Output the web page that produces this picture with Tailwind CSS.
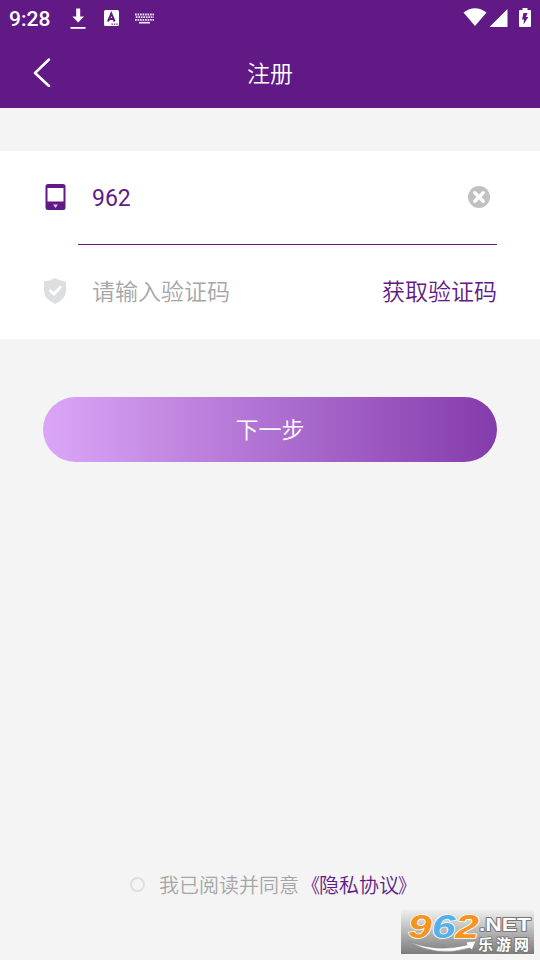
<!DOCTYPE html>
<html lang="zh-CN">
<head>
    <meta charset="UTF-8">
    <meta name="viewport" content="width=device-width, initial-scale=1.0">
    <title>注册</title>
    <script src="https://cdn.jsdelivr.net/npm/@tailwindcss/browser@4"></script>
</head>
<body class="bg-[#f4f4f4] font-[Roboto,'Noto_Sans_CJK_SC',sans-serif]">

    <div class="relative flex flex-col w-[540px] h-[960px] overflow-hidden">

        <!-- Header -->
        <header class="h-[108px] bg-[#611986] text-white">
            <!-- Status bar -->
            <div class="flex items-center h-9 pl-[9px] pr-[9px]">
                <span class="w-[61px] pt-[2px] text-[21px] leading-9 font-medium">9:28</span>
                <svg class="w-4 h-[22px]" viewBox="0 0 16 22" fill="white">
                    <path d="M6.2 1.5h4v8H14l-5.8 6-5.8-6h3.8z"/>
                    <path d="M.5 20h15v1.8H.5z"/>
                </svg>
                <svg class="ml-[18px] w-[15px] h-4" viewBox="0 0 15 16">
                    <rect width="15" height="16" rx="1.5" fill="white"/>
                    <path d="M4 11.5 7.3 3.5 10.6 11.5M5.2 9h4.3" fill="none" stroke="#611986" stroke-width="2"/>
                    <path d="M7.5 13.5h1.3v1.2H7.5zM10 13.5h1.3v1.2H10zM12.3 13.5h1.3v1.2h-1.3z" fill="#611986"/>
                </svg>
                <svg class="ml-4 w-[19px] h-[11px]" viewBox="0 0 19 11" fill="none" stroke="#efe4f4">
                    <path d="M0 1.5h19" stroke-width="2" stroke-dasharray="1.7 .8"/>
                    <path d="M.8 4.2h18" stroke-width="1.8" stroke-dasharray="1.7 .8"/>
                    <path d="M0 6.9h19" stroke-width="1.8" stroke-dasharray="1.7 .8"/>
                    <path d="M4 9.7h11" stroke-width="1.7"/>
                </svg>
                <svg class="ml-auto w-6 h-5" viewBox="0 0 24 20" fill="white">
                    <path d="M.5 4.5Q12-4 23.5 4.5L12 18z"/>
                </svg>
                <svg class="ml-[2px] w-[19px] h-5" viewBox="0 0 19 20" fill="white">
                    <path d="M18.5 1v18H.5z"/>
                </svg>
                <svg class="ml-[11px] w-3 h-5" viewBox="0 0 12 20">
                    <path d="M3.5 0h5v2H11q1 0 1 1v15q0 1-1 1H1q-1 0-1-1V3q0-1 1-1h2.5z" fill="white"/>
                    <path d="M4.5 5h4L7 9h2.3L4.5 16.5 5 11.5H3z" fill="#611986"/>
                </svg>
            </div>
            <!-- Title bar -->
            <div class="grid grid-cols-[1fr_auto_1fr] items-center h-[72px] px-8">
                <button aria-label="返回" class="w-5 h-[30px]">
                    <svg class="w-5 h-[30px]" viewBox="0 0 20 30" fill="none" stroke="white" stroke-width="2.5" stroke-linecap="round" stroke-linejoin="round">
                        <path d="M17 2.5 3 16 17 29"/>
                    </svg>
                </button>
                <h1 class="pt-[5px] text-[23px] leading-8 font-[350]">注册</h1>
            </div>
        </header>

        <!-- Form -->
        <section class="mt-[43px] h-[188px] bg-white pl-[43px] pr-[43px] text-[23px] font-[350]">
            <div class="flex items-center h-[93px]">
                <svg class="w-6 h-7 mb-[2px]" viewBox="0 0 24 28">
                    <rect x="2.5" y="1" width="20" height="26" rx="2.5" fill="#611986"/>
                    <path d="M4.5 5h16v13.5h-16z" fill="white"/>
                    <path d="M10 21.5h5L12.5 25z" fill="#d9c5e4"/>
                </svg>
                <span class="ml-[25px] pt-[3px] font-normal text-[#611986]">962</span>
                <svg class="ml-auto mr-[7px] mb-[2px] w-[22px] h-[22px]" viewBox="0 0 22 22">
                    <circle cx="11" cy="11" r="11" fill="#c1c1c1"/>
                    <path d="m6.8 6.8 8.4 8.4m0-8.4-8.4 8.4" stroke="white" stroke-width="3.4" stroke-linecap="round"/>
                </svg>
            </div>
            <div class="ml-[35px] h-px bg-[#611986]"></div>
            <div class="flex items-center h-[93px]">
                <svg class="w-6 h-7 mb-[2px]" viewBox="0 0 24 28">
                    <path d="M12 1Q16.5 4 23 4.5v9.5q0 8-11 13Q1 22 1 14V4.5Q7.5 4 12 1z" fill="#dcdee0"/>
                    <path d="m6.5 13 4.5 4 7-7.5" fill="none" stroke="white" stroke-width="2.8"/>
                </svg>
                <span class="ml-[25px] pt-[4px] text-[#a6a6a6]">请输入验证码</span>
                <button class="ml-auto pt-[4px] text-[#611986]">获取验证码</button>
            </div>
        </section>

        <button class="mt-[58px] mx-[43px] h-[65px] pt-[4px] rounded-full bg-linear-to-r/srgb from-[#dba6f8] to-[#843bab] text-white text-[23px] font-[350]">下一步</button>

        <!-- Agreement -->
        <div class="flex items-center mt-auto mb-[61px] ml-[130px] h-[30px] text-[20px] font-[350]">
            <span class="w-[15px] h-[15px] rounded-full border-2 border-[#dedede]"></span>
            <span class="ml-[14px] pt-[3px] text-[#a6a6a6]">我已阅读并同意</span>
            <a class="flex pt-[3px] text-[#611986]"><span class="origin-right translate-x-px scale-x-90">《</span>隐私协议<span class="origin-left -translate-x-px scale-x-90">》</span></a>
        </div>

        <!-- Site badge -->
        <svg class="absolute left-[401px] top-[910px] w-[133px] h-11" viewBox="0 0 133 44">
            <defs>
                <linearGradient id="badge" x2="0" y2="1">
                    <stop stop-color="#efefef"/>
                    <stop offset="1" stop-color="#7c7c7c"/>
                </linearGradient>
            </defs>
            <path d="M0 0h133v44H0z" fill="url(#badge)"/>
            <path d="M7 31Q35 43 66 35L65 32 75 31 71 40 69 38Q35 48 7 31z" fill="white" stroke="#888" stroke-width=".7"/>
            <g font-family="Liberation Sans, sans-serif" font-weight="bold" paint-order="stroke" stroke-linejoin="round">
                <text x="7" y="28" font-size="34" font-style="italic" textLength="71" lengthAdjust="spacingAndGlyphs" stroke="white" stroke-width="1.5"><tspan fill="#f7941d">9</tspan><tspan fill="#55b1e8">6</tspan><tspan fill="#f7941d">2</tspan></text>
                <text x="78" y="21" font-size="18" textLength="52" lengthAdjust="spacingAndGlyphs" fill="white" stroke="#777" stroke-width="1.8">.NET</text>
                <text x="77" y="40" font-size="15" textLength="51" font-family="Noto Sans CJK SC, sans-serif" fill="white" stroke="#777" stroke-width="1.8">乐游网</text>
            </g>
        </svg>

    </div>

</body>
</html>
